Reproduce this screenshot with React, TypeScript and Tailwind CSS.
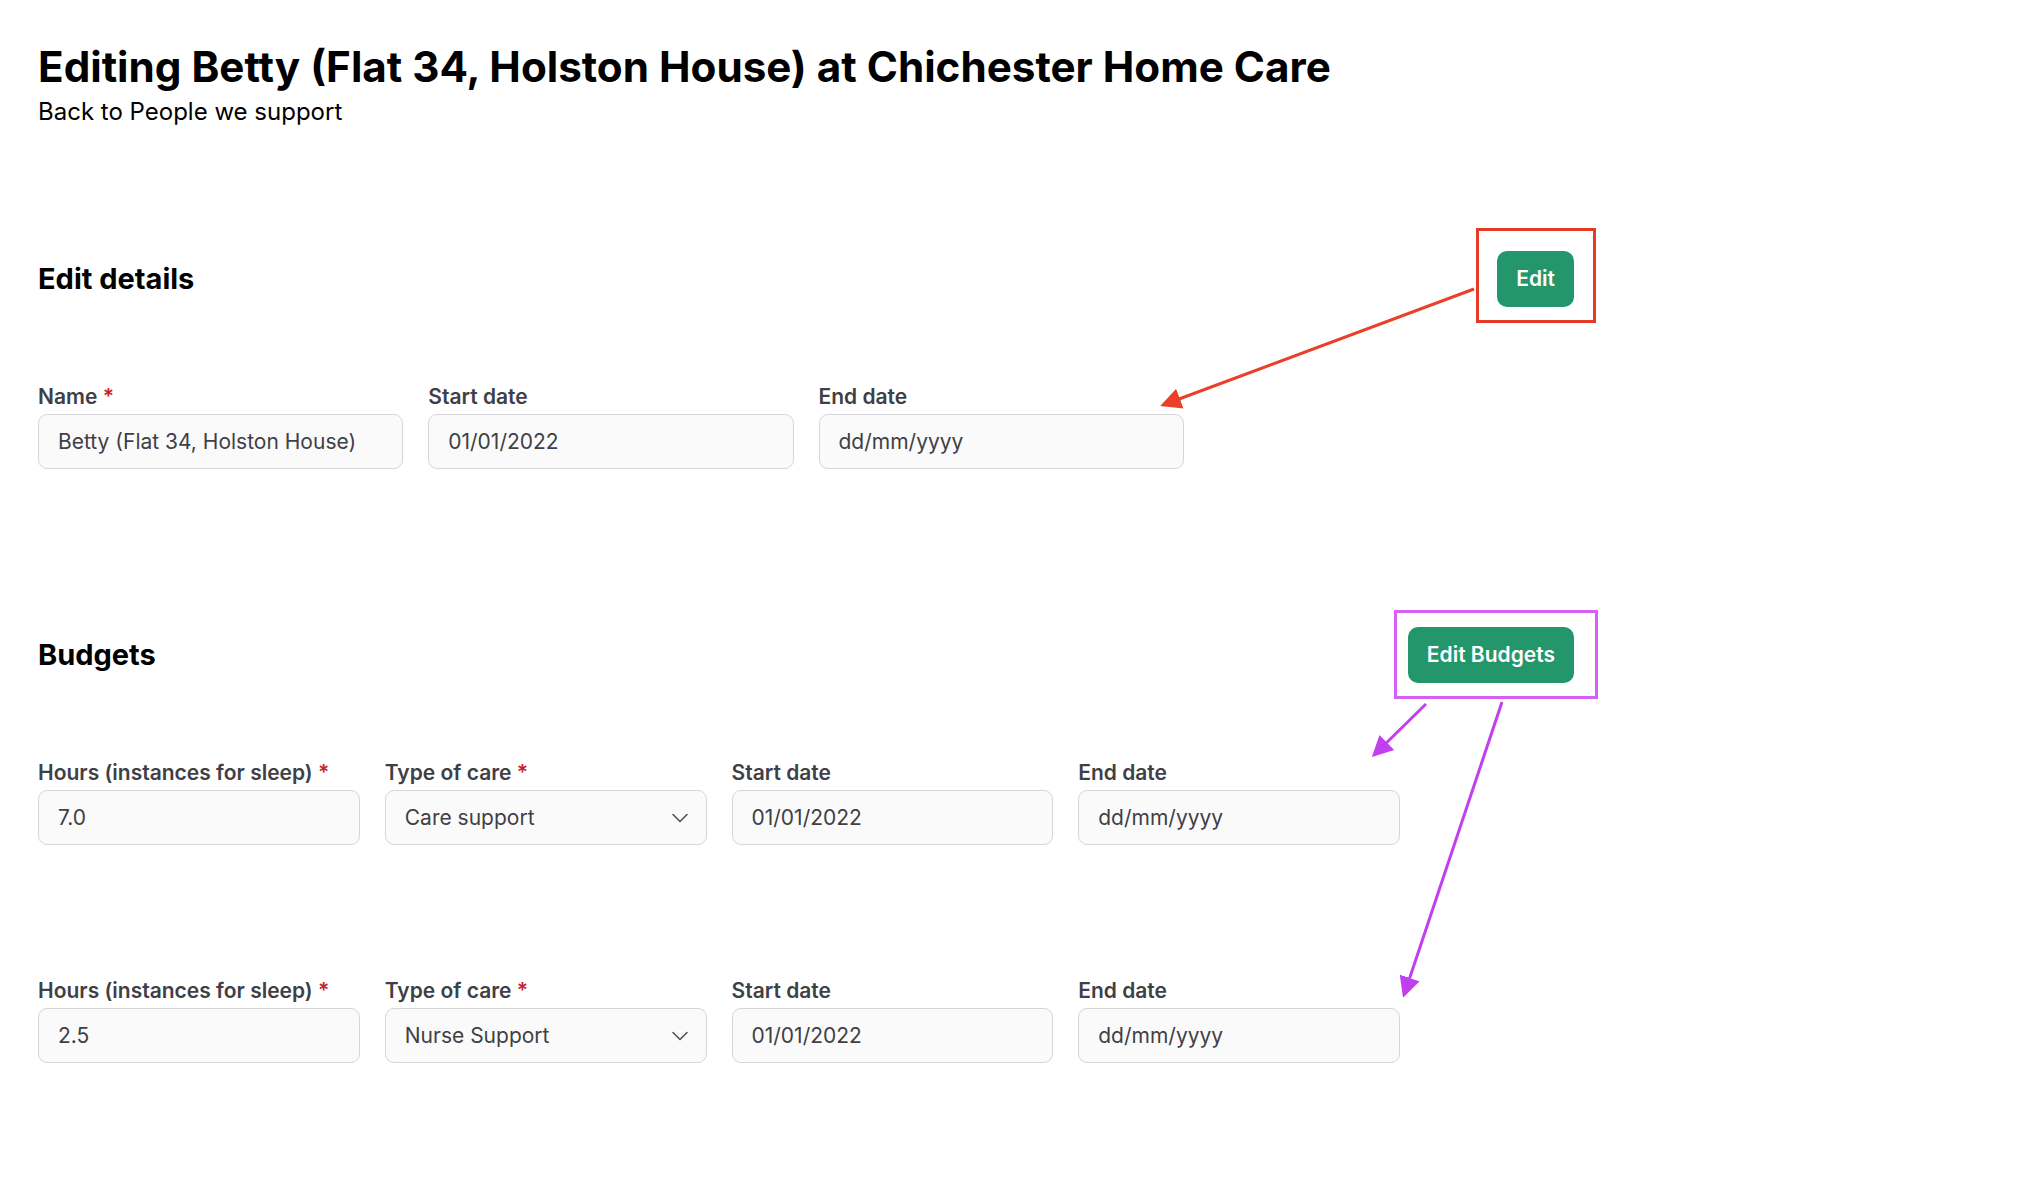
import React from 'react';
import { ChevronDown } from 'lucide-react';

type Field = {
    label: string;
    value: string;
    required?: boolean;
    select?: boolean;
};

const detailFields: Field[] = [
    { label: 'Name', value: 'Betty (Flat 34, Holston House)', required: true },
    { label: 'Start date', value: '01/01/2022' },
    { label: 'End date', value: 'dd/mm/yyyy' },
];

const budgets: Field[][] = [
    [
        { label: 'Hours (instances for sleep)', value: '7.0', required: true },
        { label: 'Type of care', value: 'Care support', required: true, select: true },
        { label: 'Start date', value: '01/01/2022' },
        { label: 'End date', value: 'dd/mm/yyyy' },
    ],
    [
        { label: 'Hours (instances for sleep)', value: '2.5', required: true },
        { label: 'Type of care', value: 'Nurse Support', required: true, select: true },
        { label: 'Start date', value: '01/01/2022' },
        { label: 'End date', value: 'dd/mm/yyyy' },
    ],
];

const careTypes = ['Care support', 'Nurse Support'];

const FormField: React.FC<{ field: Field }> = ({ field }) => (
    <label className="flex flex-col gap-[5px]">
        <span className="text-[21px] leading-[24px] font-semibold text-[#3f3f46]">
            {field.label}
            {field.required && <span className="text-[#c8232c]"> *</span>}
        </span>
        {field.select ? (
            <div className="relative">
                <select
                    defaultValue={field.value}
                    className="w-full h-[55px] appearance-none rounded-[9px] border border-[#d6d6da] bg-[#fafafa] pl-[19px] pr-10 text-[21px] text-[#3f3f46] outline-none"
                >
                    {careTypes.map((c) => (
                        <option key={c} value={c}>{c}</option>
                    ))}
                </select>
                <ChevronDown className="pointer-events-none absolute right-[13px] top-1/2 -translate-y-1/2 w-[28px] h-[28px] text-[#52525b]" strokeWidth={1.4} />
            </div>
        ) : (
            <input
                readOnly
                value={field.value}
                className="w-full h-[55px] rounded-[9px] border border-[#d6d6da] bg-[#fafafa] px-[19px] text-[21px] text-[#3f3f46] outline-none"
            />
        )}
    </label>
);

const GreenButton: React.FC<{ children: React.ReactNode }> = ({ children }) => (
    <button className="h-[56px] px-[19px] rounded-[10px] bg-[#24966b] text-white text-[21px] font-semibold">
        {children}
    </button>
);

// callout boxes and arrows drawn over the form
const Annotations = () => (
    <svg className="pointer-events-none absolute left-0 top-0" width="2038" height="1202">
        <defs>
            <marker id="head-red" markerWidth="8" markerHeight="8" refX="6" refY="4" orient="auto" markerUnits="strokeWidth">
                <path d="M0,0.5 L7,4 L0,7.5 Z" fill="#ea3f28" />
            </marker>
            <marker id="head-purple" markerWidth="8" markerHeight="8" refX="6" refY="4" orient="auto" markerUnits="strokeWidth">
                <path d="M0,0.5 L7,4 L0,7.5 Z" fill="#c23ff0" />
            </marker>
        </defs>
        <rect x="1477.5" y="229.5" width="117" height="92" fill="none" stroke="#e33b26" strokeWidth="3" />
        <line x1="1474" y1="289" x2="1163" y2="405" stroke="#ea3f28" strokeWidth="3" markerEnd="url(#head-red)" />
        <rect x="1395.5" y="611.5" width="201" height="86" fill="none" stroke="#d65ff6" strokeWidth="3" />
        <line x1="1426" y1="704" x2="1374" y2="755" stroke="#c23ff0" strokeWidth="3" markerEnd="url(#head-purple)" />
        <line x1="1502" y1="702" x2="1404" y2="995" stroke="#c23ff0" strokeWidth="3" markerEnd="url(#head-purple)" />
    </svg>
);

export default function App() {
    return (
        <div className="relative min-h-[1202px] bg-white font-['Inter',sans-serif] text-black">
            <div className="w-[1536px] ml-[38px] pt-[43px] pb-20">
                <h1 className="text-[42.2px] leading-[48px] font-bold">
                    Editing Betty (Flat 34, Holston House) at Chichester Home Care
                </h1>
                <a className="block text-[24px] leading-[42px]">Back to People we support</a>

                <section className="mt-[118px]">
                    <div className="flex items-center justify-between">
                        <h2 className="text-[29px] font-bold">Edit details</h2>
                        <GreenButton>Edit</GreenButton>
                    </div>
                    <div className="mt-[78px] grid grid-cols-4 gap-x-[25px]">
                        {detailFields.map((f) => (
                            <FormField key={f.label} field={f} />
                        ))}
                    </div>
                </section>

                <section className="mt-[158px]">
                    <div className="flex items-center justify-between">
                        <h2 className="text-[29px] font-bold">Budgets</h2>
                        <GreenButton>Edit Budgets</GreenButton>
                    </div>
                    <div className="mt-[78px] flex flex-col gap-[134px]">
                        {budgets.map((row, i) => (
                            <div key={i} className="w-[1362px] grid grid-cols-4 gap-x-[25px]">
                                {row.map((f) => (
                                    <FormField key={f.label} field={f} />
                                ))}
                            </div>
                        ))}
                    </div>
                </section>
            </div>
            <Annotations />
        </div>
    );
}
